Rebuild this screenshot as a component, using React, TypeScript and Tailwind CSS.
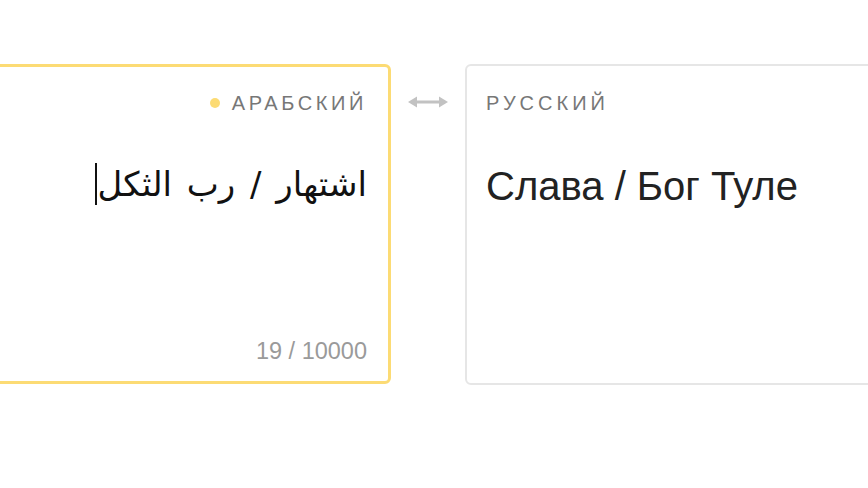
import React from 'react';

const SwapArrow: React.FC = () => (
  <svg width="40" height="12" viewBox="0 0 40 12" className="text-[#c2c2c2]">
    <path d="M0 6 L9 0.5 L9 11.5 Z" fill="currentColor" />
    <path d="M40 6 L31 0.5 L31 11.5 Z" fill="currentColor" />
    <rect x="8" y="4.5" width="24" height="3" fill="currentColor" />
  </svg>
);

const App: React.FC = () => {
  return (
    <div className="w-[868px] h-[488px] bg-white overflow-hidden font-[family-name:'Liberation_Sans',Arial,sans-serif]">
      <div className="flex items-start pt-[64px] -ml-[12px]">
        {/* Source card */}
        <div className="w-[403px] h-[320px] shrink-0 rounded-[6px] border-[3px] border-[#fcdb74] flex flex-col pt-[24px] pb-[18px] pr-[21px]">
          <div className="flex items-center justify-end gap-[12px] h-[24px]">
            <span className="w-[10px] h-[10px] rounded-full bg-[#fcdb74]" />
            <span className="text-[20px] tracking-[0.18em] text-[#777] leading-none">АРАБСКИЙ</span>
          </div>
          <div className="mt-[48px] flex justify-end">
            <div dir="rtl" className="relative text-[34px] leading-[42px] text-[#111] [word-spacing:4px] font-[family-name:'DejaVu_Sans',sans-serif]">
              اشتهار / رب الثكل
              <span className="absolute left-[-2px] top-0 w-[2px] h-[42px] bg-[#111]" />
            </div>
          </div>
          <div className="mt-auto text-right text-[23.5px] text-[#9a9a9a] leading-none">19 / 10000</div>
        </div>

        {/* Arrow */}
        <div className="w-[74px] shrink-0 flex justify-center pt-[32px]">
          <SwapArrow />
        </div>

        {/* Target card */}
        <div className="w-[420px] h-[321px] shrink-0 rounded-[6px] border-2 border-[#e6e6e6] flex flex-col pt-[25px] pl-[19px]">
          <div className="h-[24px] flex items-center">
            <span className="text-[20px] tracking-[0.2em] text-[#777] leading-none">РУССКИЙ</span>
          </div>
          <div className="mt-[50px] text-[40px] leading-[42px] text-[#222]">Слава / Бог Туле</div>
        </div>
      </div>
    </div>
  );
};

export default App;
